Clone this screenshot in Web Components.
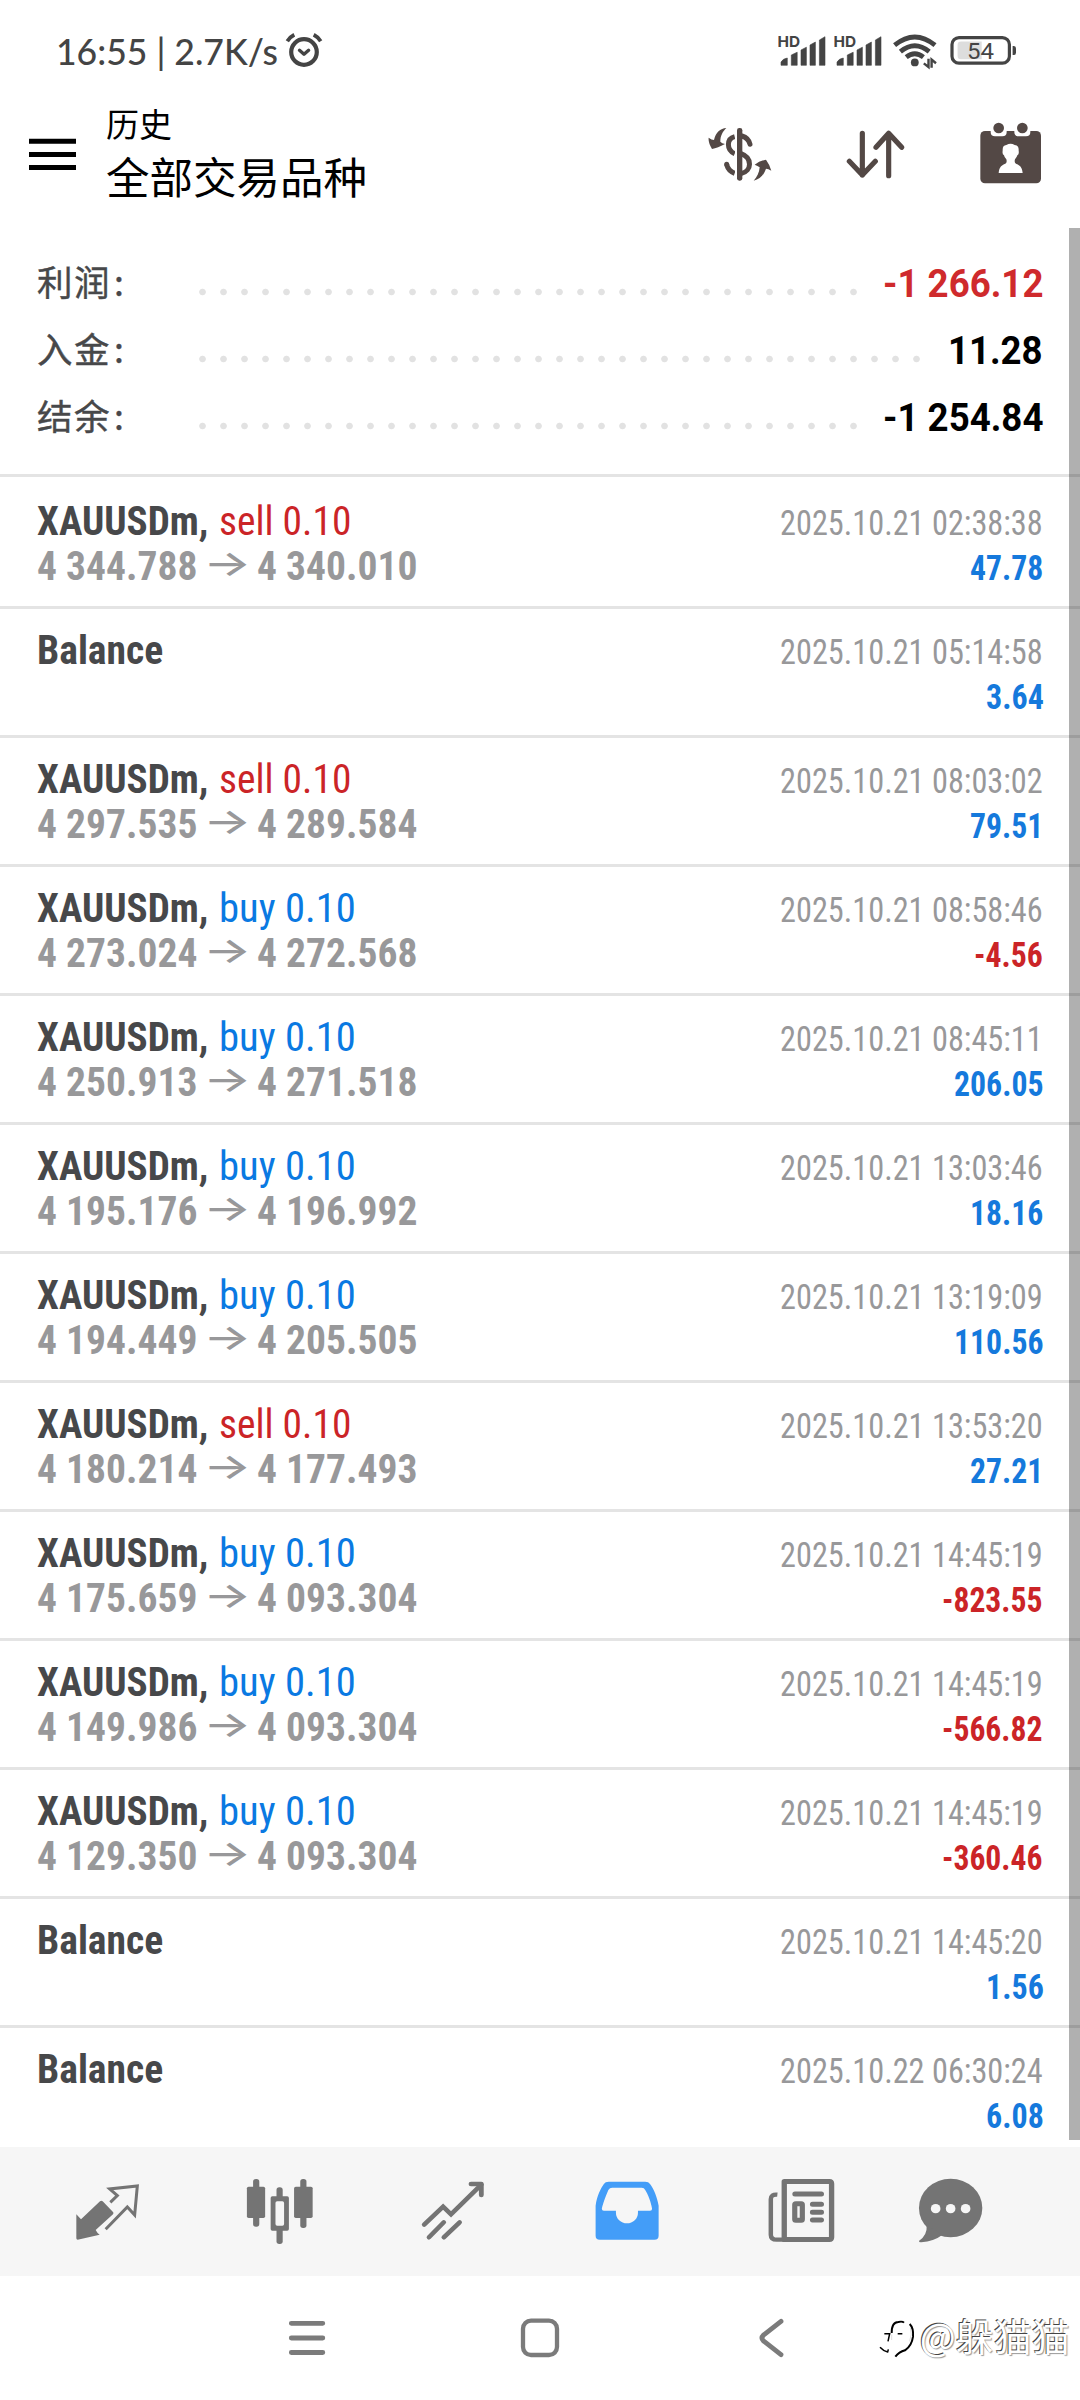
<!DOCTYPE html>
<html lang="zh-CN">
<head>
<meta charset="utf-8">
<title>历史</title>
<style>
html, body { margin: 0; padding: 0; background: #fff; }
body { width: 1080px; height: 2400px; overflow: hidden; font-family: Roboto, "Noto Sans CJK SC", sans-serif; }
</style>
</head>
<body>
<history-app></history-app>
<script>
const define = (name, css, html, setup) => {
  const tpl = document.createElement('template');
  tpl.innerHTML = `<style>${css}</style>${html}`;
  customElements.define(name, class extends HTMLElement {
    connectedCallback() {
      if (this.shadowRoot) return;
      this.attachShadow({ mode: 'open' }).appendChild(tpl.content.cloneNode(true));
      if (setup) setup(this, this.shadowRoot);
    }
  });
};

/* Each icon: [viewBox, width, height, markup] */
const ICONS = {
  alarm: ['284 30 40 40', 40, 40, `<g fill="none" stroke="#444" stroke-linecap="round" stroke-linejoin="round"><circle cx="304" cy="52" r="12.8" stroke-width="4.2"/><path d="M299.5 50.3L304 54.2L308.6 50.3" stroke-width="3.4"/><path d="M287.3 41.2Q290 37 294.3 34.8M320.7 41.2Q318 37 313.7 34.8" stroke-width="3.8" stroke-linecap="butt"/></g>`],
  signal: ['778 33 50 36', 50, 36, `<g fill="#444"><text x="777.6" y="46.6" font-family="Inter" font-weight="700" font-size="15" textLength="22.6" lengthAdjust="spacingAndGlyphs">HD</text><path d="M781 65.3V62Q783 58.6 787.3 58V65.3ZM791.3 65.3V55L797.2 52.2V65.3ZM801 65.3V50L806.4 47.2V65.3ZM810 65.3V45L815.4 42V65.3ZM819.4 65.3V40L825 36.7V65.3Z" stroke="#444" stroke-width=".6" stroke-linejoin="round"/></g>`],
  wifi: ['892 32 46 38', 46, 38, `<g fill="none" stroke="#444" stroke-width="4.8"><path d="M894.6 45.2Q914.8 28.8 935 45.2"/><path d="M900.4 51.6Q914.8 39.8 929.2 51.6"/><path d="M906.2 57.2Q914.8 50.4 923.4 57.2"/></g><circle cx="914.8" cy="62.4" r="3.9" fill="#444"/><path d="M928.5 58.7V67L923.8 63.4M931.6 67.8V59.6L936 63.2" fill="none" stroke="#444" stroke-width="2.4"/>`],
  battery: ['949 33 68 36', 68, 36, `<path d="M961 41.6H981.7V59.3H961Q957.6 59.3 957.6 56V45Q957.6 41.6 961 41.6" fill="#ddd"/><rect x="952" y="37.6" width="57.4" height="25.6" rx="7" fill="none" stroke="#444" stroke-width="3.2"/><path d="M1012.6 46H1014Q1016 46 1016 48.5V52.6Q1016 55.1 1014 55.1H1012.6Z" fill="#444"/><text x="967" y="59.3" font-family="Roboto" font-size="22.5" fill="#444" textLength="27" lengthAdjust="spacingAndGlyphs">54</text>`],
  menu: ['29 138 47 34', 47, 34, `<path d="M29 141.3H76M29 154.4H76M29 167.6H76" stroke="#000" stroke-width="5"/>`],
  dollar: ['20 15 198 174', 66, 58, `<g fill="none" stroke="#534845" stroke-width="15"><path d="M103 50C78 56 78 90 103 101"/><path d="M125 48Q145 54 149 73" stroke-linecap="round"/><path d="M122 101C156 113 156 153 122 161"/><path d="M79 134Q84 153 103 160" /></g><circle cx="79" cy="133" r="7.5" fill="#534845"/><path d="M104 20h6v165h-6z" fill="#fff"/><rect x="110" y="24" width="16" height="158" rx="7" fill="#534845"/><path d="M78 24C60 25 46 38 41 60Q34 60 25 53Q23 68 35 87Q52 84 74 72Q65 70 60 65C60 46 68 34 78 24ZM160 182C170 171 177 158 178 142Q172 138 163 134Q178 122 197 119Q207 132 213 152Q204 146 197 146C190 166 178 178 160 182Z" fill="#534845"/>`],
  sort: ['498 390 177 147', 59, 49, `<path d="M547 400V525M508 484L547 525L586 484M626 527V400M588 442L626 400L665 442" fill="none" stroke="#534845" stroke-width="15.5" stroke-linecap="round" stroke-linejoin="round"/>`],
  contact: ['899 366 186 186', 62, 62, `<rect x="900" y="393" width="182" height="157" rx="14" fill="#534845"/><path d="M931 390H979V396Q979 409 966 409H944Q931 409 931 396ZM1002 390H1050V396Q1050 409 1037 409H1015Q1002 409 1002 396Z" fill="#fff"/><circle cx="955" cy="384" r="16" fill="#534845"/><circle cx="1026" cy="384" r="16" fill="#534845"/><path d="M955 519C957 499 964 496 975 491Q981 487 978 478Q972 472 971 466Q965 463 967 452Q966 436 978 435Q991 428 1003 435Q1016 436 1015 452Q1017 463 1011 466Q1009 473 1004 478Q1001 487 1007 491C1018 496 1025 499 1027 519Z" fill="#fff"/>`],
  quotes: ['7 10 210 220', 70, 73.3, `<path d="M20 131L34 146L91 92Q95 89 99 92L130 124Q133 127 130 131L78 178Q83 188 90 192L24 207Q20 207 20 203Z" fill="#747474"/><path d="M122 95L143 75L120 55L203 46L195 133L173 109L108 176" fill="none" stroke="#747474" stroke-width="9"/>`],
  chart: ['712.5 130 203.3 220', 70, 73.3, `<g fill="#747474"><rect x="736" y="145" width="18" height="143" rx="8"/><rect x="718" y="168" width="53" height="94" rx="5"/><rect x="804" y="170" width="18" height="170" rx="8"/><rect x="787" y="197" width="53" height="103" rx="5"/><rect x="873" y="145" width="18" height="147" rx="8"/><rect x="855" y="168" width="54" height="94" rx="5"/></g><rect x="801" y="212" width="25" height="73" rx="5" fill="#f6f6f6"/>`],
  trade: ['1217 130 203.3 220', 70, 73.3, `<path d="M1232 282L1287 228L1310 251L1398 162M1246 320L1289 275M1289 320L1335 275" fill="none" stroke="#747474" stroke-width="13.5" stroke-linecap="round"/><path d="M1368 160H1398V193" fill="none" stroke="#747474" stroke-width="14" stroke-linecap="round" stroke-linejoin="round"/>`],
  history: ['151.5 130 203.3 220', 70, 73.3, `<path d="M162 225C166 195 176 175 186 160Q190 153 200 153H306Q316 153 320 160C331 175 341 200 345 225V315Q345 327 333 327H174Q162 327 162 315Z" fill="#439df8"/><path d="M180 234C184 215 194 190 199 178Q203 171 210 171H296Q303 171 306 178C314 190 323 215 326 234Q326 240 320 240H285V246A32 32 0 0 1 221 246V240H186Q180 240 180 234Z" fill="#f6f6f6"/>`],
  news: ['657 130 203.3 220', 70, 73.3, `<g fill="none" stroke="#747474"><path d="M710 152.5H841Q847.500 152.500 847.500 159V320Q847.500 326.500 841 326.500H710Z" stroke-width="15.500" stroke-linejoin="round"/><path d="M690 192Q671 190 671 206V312Q671 327 688 327H710" stroke-width="13"/><path d="M741 190H818M792 221H818M792 244.500H818M792 268H818" stroke-width="15" stroke-linecap="round"/><rect x="740.500" y="219.500" width="22" height="49" rx="3" stroke-width="15"/></g>`],
  chat: ['1090 130 203.3 220', 70, 73.3, `<g fill="#747474"><ellipse cx="1193.500" cy="232" rx="92" ry="87.500"/><path d="M1124 283Q1126 314 1102 330Q1100 335 1108 334.500Q1145 332 1170 312Z"/></g><g fill="#f6f6f6"><circle cx="1150" cy="234" r="14"/><circle cx="1193.500" cy="234" r="14"/><circle cx="1237" cy="234" r="14"/></g>`],
  recents: ['285 2310 44 56', 44, 56, `<path d="M291.300 2323.300H322.800M291.300 2338H322.800M291.300 2352.500H322.800" stroke="#7b7b7b" stroke-width="4.800" stroke-linecap="round"/>`],
  home: ['518 2310 44 56', 44, 56, `<rect x="523" y="2320.700" width="34" height="34.300" rx="8" fill="none" stroke="#7b7b7b" stroke-width="4.300"/>`],
  back: ['750 2310 44 56', 44, 56, `<path d="M781 2321.300L763.500 2335Q760.500 2338 763.500 2341L781 2354.700" fill="none" stroke="#7b7b7b" stroke-width="4.800" stroke-linecap="round"/>`],
  mark: ['25 45 110 120', 36.7, 40, `<path d="M66 87Q66 54 86 54Q98 51 103 56M120 60Q132 72 130 98Q126 126 106 139Q88 144 77 158" fill="none" stroke="#000" stroke-width="6"/><path d="M44 89H60L55 112M84 89H98M31 130Q42 142 54 144L56 136" fill="none" stroke="#000" stroke-width="4.500"/><path d="M66 92V108M122 70Q128 90 120 112" fill="none" stroke="#ccc" stroke-width="2"/>`]
};

define('ui-icon', `:host{display:block;flex:none}svg{display:block}`, ``, (el, root) => {
  const [vb, w, h, body] = ICONS[el.getAttribute('name')];
  root.innerHTML += `<svg width="${w}" height="${h}" viewBox="${vb}" preserveAspectRatio="none" aria-hidden="true">${body}</svg>`;
});

/* Single line of text condensed or widened to a fixed run length. */
define('fit-text', `
:host{display:block;flex:none;white-space:pre;font-stretch:75%}
span{display:inline-block;transform-origin:0 50%}`, `<span><slot></slot></span>`, (el, root) => {
  const w = parseFloat(el.getAttribute('w'));
  const s = root.querySelector('span');
  el.style.width = w + 'px';
  s.style.transform = `scaleX(${w / s.offsetWidth})`;
});

define('status-bar', `
:host{display:flex;height:102px;box-sizing:border-box;padding:29px 63px 0 56px;align-items:flex-start}
.t{font:500 36.500px/44px Lato;color:#444}
ui-icon.a{margin:1px 0 0 6px}
.r{margin-left:auto;display:flex;padding-top:4px}
.s2{margin-left:6px}.w{margin:-1px 0 0 8px}.b{margin-left:11px}`,
`<fit-text class="t" w="222">16:55 | 2.7K/s</fit-text><ui-icon class="a" name="alarm"></ui-icon>
<div class="r"><ui-icon name="signal"></ui-icon><ui-icon class="s2" name="signal"></ui-icon><ui-icon class="w" name="wifi"></ui-icon><ui-icon class="b" name="battery"></ui-icon></div>`);

define('title-bar', `
:host{display:flex;height:126px;box-sizing:border-box;padding:0 38px 0 29px;align-items:flex-start;color:#000}
.m{margin-top:36px}
.t{margin-left:30px;display:flex;flex-direction:column;font-family:"Noto Sans CJK SC",sans-serif}
.h{font-size:33px;line-height:42px}.n{font-size:43.500px;line-height:63px}
.i{margin-left:auto;display:flex;align-items:flex-start}`,
`<ui-icon class="m" name="menu"></ui-icon>
<div class="t"><div class="h">历史</div><div class="n">全部交易品种</div></div>
<div class="i"><ui-icon name="dollar" style="margin:23px 73.500px 0 0"></ui-icon><ui-icon name="sort" style="margin:28px 75px 0 0"></ui-icon><ui-icon name="contact" style="margin-top:20px"></ui-icon></div>`);

customElements.define('account-summary', class extends HTMLElement {
  connectedCallback() {
    const root = this.attachShadow({ mode: 'open' });
    const rows = [['利润', 32, '-1 266.12', 160, '#cf2a2c'], ['入金', 35, '11.28', 95, '#000'], ['结余', 32, '-1 254.84', 160, '#000']];
    root.innerHTML = `<style>
:host{display:block;height:249px;box-sizing:border-box;padding:30px 37px 0 37px;border-bottom:3px solid #e4e4e4}
.row{display:flex;height:67px;align-items:flex-start}
.l{width:155px;flex:none;display:flex;margin-top:-2px;font:400 35.500px/50px "Noto Sans CJK SC",sans-serif;letter-spacing:1.500px;color:#47484a;-webkit-text-stroke:.4px #47484a}
.l i{font-style:normal;margin-left:3px}
.d{height:8px;flex:none;margin-top:32px;background:radial-gradient(circle at 10.500px 4px,#e2e2e2 2.900px,transparent 3.700px) 0 0/21px 8px repeat-x;margin-top:30px}
.v{margin:1px 0 0 auto;font:700 38.500px/50px Roboto;font-stretch:100%}
</style>` + rows.map(([l, d, v, w, c]) => `<div class="row"><div class="l">${l}<i>:</i></div><div class="d" style="width:${d * 21}px"></div><fit-text class="v" w="${w}" style="color:${c}">${v}</fit-text></div>`).join('');
  }
});

customElements.define('deal-row', class extends HTMLElement {
  connectedCallback() {
    const a = n => this.getAttribute(n);
    const root = this.attachShadow({ mode: 'open' });
    const side = a('side'), value = a('value');
    const w = 2 + [...value].reduce((s, ch) => s + (ch === '.' ? 7.800 : ch === '-' ? 11.500 : 15.900), 0);
    const left = side
      ? `<div class="n"><fit-text w="171.500">XAUUSDm,</fit-text><fit-text class="s ${side}" w="${side === 'sell' ? 132 : 137}">${side} 0.10</fit-text></div>
<div class="p"><fit-text w="160">${a('from')}</fit-text><span class="ar"><b>→</b></span><fit-text w="160">${a('to')}</fit-text></div>`
      : `<div class="n"><fit-text w="126">Balance</fit-text></div>`;
    root.innerHTML = `<style>
:host{display:flex;justify-content:space-between;height:129px;box-sizing:border-box;padding:18px 37px 0;border-bottom:3px solid #e4e4e4;font-family:Roboto}
.n,.p{display:flex;height:45px;line-height:45px}
.n{font-size:41.500px;font-weight:700;color:#47484a}
.s{font-weight:400;margin-left:10.500px}
.sell{color:#cb2427}.buy{color:#0a79e2}
.p{font-size:41.500px;font-weight:700;color:#98989a}
.ar{width:60px;display:flex;justify-content:center;font:500 36px/41px Inter;flex:none}
.ar b{display:block;font-weight:500;transform:scaleX(1.4)}
.r{display:flex;flex-direction:column;align-items:flex-end;font-size:34.500px;line-height:45px;padding-top:3px}
.d{color:#98989a;font-weight:400}
.v{font-weight:700}
.up{color:#1579dc}.down{color:#cb2427}
</style><div>${left}</div><div class="r"><fit-text class="d" w="263">${a('time')}</fit-text><fit-text class="v ${value[0] === '-' ? 'down' : 'up'}" w="${w}">${value}</fit-text></div>`;
  }
});

const DEALS = [
  ['sell', '4 344.788', '4 340.010', '2025.10.21 02:38:38', '47.78'],
  ['', '', '', '2025.10.21 05:14:58', '3.64'],
  ['sell', '4 297.535', '4 289.584', '2025.10.21 08:03:02', '79.51'],
  ['buy', '4 273.024', '4 272.568', '2025.10.21 08:58:46', '-4.56'],
  ['buy', '4 250.913', '4 271.518', '2025.10.21 08:45:11', '206.05'],
  ['buy', '4 195.176', '4 196.992', '2025.10.21 13:03:46', '18.16'],
  ['buy', '4 194.449', '4 205.505', '2025.10.21 13:19:09', '110.56'],
  ['sell', '4 180.214', '4 177.493', '2025.10.21 13:53:20', '27.21'],
  ['buy', '4 175.659', '4 093.304', '2025.10.21 14:45:19', '-823.55'],
  ['buy', '4 149.986', '4 093.304', '2025.10.21 14:45:19', '-566.82'],
  ['buy', '4 129.350', '4 093.304', '2025.10.21 14:45:19', '-360.46'],
  ['', '', '', '2025.10.21 14:45:20', '1.56'],
  ['', '', '', '2025.10.22 06:30:24', '6.08']
];

customElements.define('deal-list', class extends HTMLElement {
  connectedCallback() {
    const root = this.attachShadow({ mode: 'open' });
    root.innerHTML = `<style>:host{display:block;padding-top:3px}</style>` +
      DEALS.map(([s, f, t, d, v]) => `<deal-row side="${s}" from="${f}" to="${t}" time="${d}" value="${v}"></deal-row>`).join('');
  }
});

define('tab-bar', `
:host{display:grid;grid-template-columns:repeat(5,173.500px) 125px;justify-items:center;align-items:start;height:129px;box-sizing:border-box;padding:26.500px 0 0 20px;background:#f6f6f6}`,
`<ui-icon name="quotes"></ui-icon><ui-icon name="chart"></ui-icon><ui-icon name="trade"></ui-icon><ui-icon name="history"></ui-icon><ui-icon name="news"></ui-icon><ui-icon name="chat"></ui-icon>`);

define('water-mark', `
:host{display:flex;align-items:flex-start;color:#fff}
span{font:400 38px/50px "Noto Sans CJK SC",sans-serif;text-shadow:-1px -1px 0 #444,1px 1px 1px #999;white-space:nowrap}
ui-icon{margin:9px 5px 0 0}`,
`<ui-icon name="mark"></ui-icon><span>@躲猫猫</span>`);

define('system-nav', `
:host{display:flex;height:124px;box-sizing:border-box;padding:34px 0 0 285px;align-items:flex-start;background:#fff}
ui-icon + ui-icon{margin-left:189px}
ui-icon:nth-of-type(3){margin-left:188px}
water-mark{margin:0 0 0 84px}`,
`<ui-icon name="recents"></ui-icon><ui-icon name="home"></ui-icon><ui-icon name="back"></ui-icon><water-mark></water-mark>`);

define('history-app', `
:host{display:flex;flex-direction:column;width:1080px;height:2400px;background:#fff}
main{position:relative;height:1919px;flex:none;overflow:hidden}
.bar{position:absolute;right:0;top:0;width:11px;height:1912px;background:rgba(0,0,0,.31)}`,
`<status-bar></status-bar><title-bar></title-bar>
<main><account-summary></account-summary><deal-list></deal-list><div class="bar"></div></main>
<tab-bar></tab-bar><system-nav></system-nav>`);
</script>
</body>
</html>
